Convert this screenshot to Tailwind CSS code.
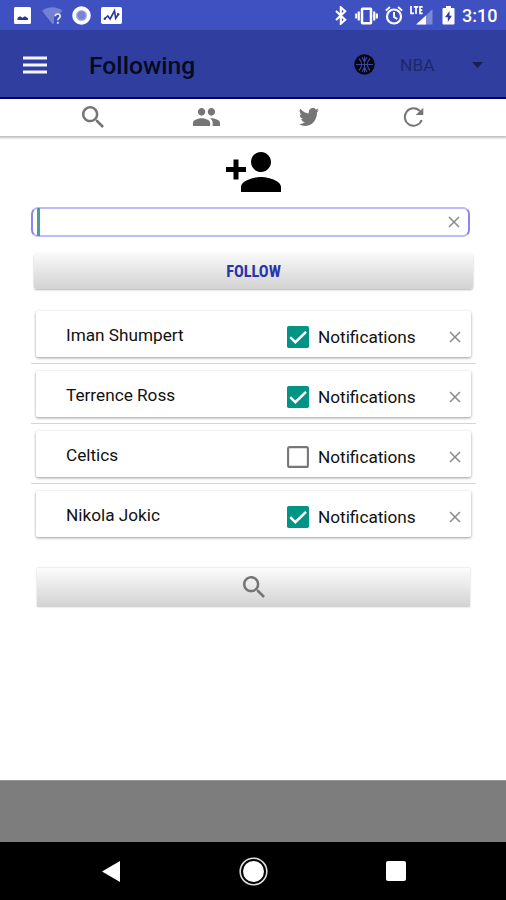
<!DOCTYPE html>
<html lang="en">
<head>
<meta charset="utf-8">
<title>Following</title>
<script src="https://cdn.jsdelivr.net/npm/@tailwindcss/browser@4"></script>
</head>
<body class="bg-white">
<svg class="hidden">
  <symbol id="search" viewBox="3 3 17.5 17.5"><path d="M15.5 14h-.79l-.28-.27C15.41 12.59 16 11.11 16 9.5 16 5.91 13.09 3 9.5 3S3 5.91 3 9.5 5.91 16 9.5 16c1.61 0 3.09-.59 4.23-1.57l.27.28v.79l5 4.99L20.49 19l-4.99-5zm-6 0C7.01 14 5 11.99 5 9.5S7.01 5 9.5 5 14 7.01 14 9.5 11.99 14 9.5 14z"/></symbol>
  <symbol id="close" viewBox="0 0 12 12"><path d="M1 1l10 10M11 1L1 11" fill="none" stroke="currentColor" stroke-width="1.5"/></symbol>
  <symbol id="checked" viewBox="0 0 22 22"><rect width="22" height="22" rx="1.8" fill="#009485"/><path d="M3.2 11.2l5.2 5L19 5.8" fill="none" stroke="#fff" stroke-width="2.5"/></symbol>
  <symbol id="unchecked" viewBox="0 0 22 22"><rect x="1.1" y="1.1" width="19.8" height="19.8" rx="1.5" fill="none" stroke="#777" stroke-width="2.1"/></symbol>
</svg>
<div class="flex h-[900px] w-[506px] flex-col overflow-hidden bg-white font-[Roboto,sans-serif] text-[#111]">
  <div class="flex h-[30px] shrink-0 items-center bg-[#3f51c1] pl-[14px] pr-[9px] pt-px text-white">
    <svg class="h-[17px] w-[17px]" viewBox="0 0 17 17"><rect width="17" height="17" rx="1.5" fill="#fff"/><path d="M3.5 13V10.800l2.500-1.600 2.300 1.500L11 9.200l3 2V13z" fill="#2638a0"/></svg>
    <svg class="ml-[11px] h-[18px] w-[21px]" viewBox="0 0 21 18"><path d="M0 3.8C5.500-.9 15-.9 20.500 3.800L17 7.500c-3-.5-5 1-5 4V16l-1.500 1.200z" fill="#7380d3"/><path d="M13.200 9.300c.2-3.100 5.300-3 5 0-.2 1.800-2.400 1.800-2.400 4M15.800 14.800v2" fill="none" stroke="#e8eaff" stroke-width="1.700"/></svg>
    <svg class="ml-[9px] h-[19px] w-[19px]" viewBox="0 0 19 19"><circle cx="9.500" cy="9.500" r="9.300" fill="#fff"/><circle cx="9.500" cy="9.500" r="5.500" fill="#a3acea"/><circle cx="9.500" cy="9.500" r="4.200" fill="#7884d4"/></svg>
    <svg class="ml-[10px] h-[17px] w-[21px]" viewBox="0 0 21 17"><rect width="21" height="17" rx="1.800" fill="#fff"/><path d="M3.400 12l3.400-3 2.300 3 4.400-8.200 1.200 7.500L17.500 7" fill="none" stroke="#2638a0" stroke-width="1.600"/><circle cx="3.800" cy="11.800" r="1.200" fill="#2638a0"/><circle cx="17.200" cy="7.300" r="1.200" fill="#2638a0"/></svg>
    <svg class="ml-auto h-[19px] w-[12px]" viewBox="0 0 12 19"><path d="M1 5l9.200 8.700-4.400 4V1.300l4.400 4L1 14" fill="none" stroke="#fff" stroke-width="2.100"/></svg>
    <svg class="ml-[8px] h-[18px] w-[23px]" viewBox="0 0 23 18"><rect x="7" y="1.700" width="9" height="14.600" rx=".5" fill="none" stroke="#fff" stroke-width="2.500"/><path d="M3.800 4.500v9M1.200 6.500v5M19.200 4.500v9M21.800 6.500v5" stroke="#fff" stroke-width="2.100"/></svg>
    <svg class="ml-[7px] h-[19px] w-[18px]" viewBox="0 0 18 19"><circle cx="9" cy="10.500" r="7" fill="none" stroke="#fff" stroke-width="2.200"/><path d="M9 6v5l3.300 2M.8 4.600L4.900 1M17.200 4.600L13.100 1" fill="none" stroke="#fff" stroke-width="1.900"/></svg>
    <svg class="ml-[7px] h-[19px] w-[24px]" viewBox="0 0 24 19"><path d="M22.500 3v15.500H7z" fill="#7b89dc"/><path d="M16 9.500v9H6z" fill="#fff"/><path d="M1 0v7.300h3M3.800.9h4.500M6 .9V8M12.700.9H10v6.400h2.700M10 4.100h2.300" fill="none" stroke="#fff" stroke-width="1.700"/></svg>
    <svg class="ml-[8px] h-[19px] w-[13px]" viewBox="0 0 13 19"><path d="M4 0h5v2h2.500Q12.500 2 12.500 3v14.500q0 1-1 1h-10q-1 0-1-1V3q0-1 1-1H4z" fill="#fff"/><path d="M7.500 5L3 11.200h2.800V16L10 9.700H7.500z" fill="#2d3da8"/></svg>
    <span class="ml-[7px] mt-px w-[35px] whitespace-nowrap text-[18px] font-medium leading-none">3:10</span>
  </div>
  <div class="flex h-[69px] shrink-0 items-center border-b-2 border-[#000078] bg-[#303f9f] pl-[23px] pr-[23px]">
    <svg class="mt-[2px] h-[18px] w-[24px]" viewBox="0 0 24 18"><path d="M0 1.900h24M0 9h24M0 16.100h24" stroke="#f4f5ff" stroke-width="3"/></svg>
    <h1 class="ml-[42px] mt-[5px] whitespace-nowrap text-[24.700px] font-medium leading-none text-[#050a20]">Following</h1>
    <svg class="ml-auto mt-[2px] h-[21px] w-[21px]" viewBox="0 0 21 21"><circle cx="10.500" cy="10.500" r="10.200" fill="#050710"/><path d="M2 10.500h17M10.500 2.500v16M5 4.500c3.500 3.500 3.500 8.500 0 12M16 4.500c-3.500 3.500-3.500 8.500 0 12M8 3l2.500 5L13 3M8 18l2.500-5 2.500 5" fill="none" stroke="#3947a0" stroke-width="1.100"/></svg>
    <span class="ml-[25px] mt-[5px] w-[36px] text-[17.400px] leading-none text-[#1e2866]">NBA</span>
    <svg class="ml-[36px] mt-[2px] h-[6px] w-[11px]" viewBox="0 0 11 6"><path d="M0 0h11L5.500 6z" fill="#18204f"/></svg>
  </div>
  <div class="flex h-[37px] shrink-0 items-center pb-[2px] pl-[82px] text-[#757575] shadow-[0_1px_2px_1px_rgba(0,0,0,0.25)]">
    <svg class="h-[22px] w-[22px] fill-current"><use href="#search"/></svg>
    <svg class="ml-[89px] h-[18px] w-[27px] fill-current" viewBox="1 5 22 14" preserveAspectRatio="none"><path d="M16 11c1.660 0 2.990-1.340 2.990-3S17.660 5 16 5c-1.660 0-3 1.340-3 3s1.340 3 3 3zm-8 0c1.660 0 2.990-1.340 2.990-3S9.660 5 8 5C6.340 5 5 6.340 5 8s1.340 3 3 3zm0 2c-2.330 0-7 1.170-7 3.500V19h14v-2.500c0-2.330-4.670-3.500-7-3.500zm8 0c-.29 0-.62.02-.97.05 1.160.84 1.970 1.970 1.970 3.450V19h6v-2.500c0-2.330-4.670-3.500-7-3.500z"/></svg>
    <svg class="ml-[79px] h-[18px] w-[20px] fill-current" viewBox="0 2.300 24 19.500" preserveAspectRatio="none"><path d="M23.950 4.570a10 10 0 0 1-2.820.77 4.960 4.960 0 0 0 2.160-2.720c-.95.550-2 .95-3.130 1.180a4.920 4.920 0 0 0-8.380 4.480C7.690 8.090 4.070 6.130 1.640 3.160a4.920 4.920 0 0 0 1.520 6.570 4.900 4.900 0 0 1-2.230-.61v.06a4.920 4.920 0 0 0 3.950 4.820 5 5 0 0 1-2.210.09 4.940 4.940 0 0 0 4.600 3.420A9.870 9.870 0 0 1 0 19.540a14 14 0 0 0 7.550 2.210c9.050 0 14-7.500 14-13.980 0-.21 0-.42-.02-.63a9.940 9.940 0 0 0 2.460-2.550z"/></svg>
    <svg class="ml-[84px] h-[20px] w-[21px]" viewBox="0 0 21 20"><path d="M17 4.200A8.700 8.700 0 1 0 18.700 13" fill="none" stroke="currentColor" stroke-width="2"/><path d="M20.300.8V8h-7.600z" fill="currentColor"/></svg>
  </div>
  <main class="flex grow flex-col">
    <svg class="ml-[226px] mt-[16px] h-[40px] w-[55px] shrink-0" viewBox="1 4 22 16"><path d="M15 12c2.210 0 4-1.790 4-4s-1.790-4-4-4-4 1.790-4 4 1.790 4 4 4zm-9-2V7H4v3H1v2h3v3h2v-3h3v-2H6zm9 4c-2.670 0-8 1.340-8 4v2h16v-2c0-2.660-5.330-4-8-4z"/></svg>
    <div class="ml-[31px] mt-[15px] flex h-[30px] w-[439px] items-center rounded-[7px] border-2 border-x-[#8c85f0] border-y-[#beb9fb] pl-[4px] pr-[8px]">
      <div class="h-[28px] w-[3px] shrink-0 bg-[#4a9f92]"></div>
      <svg class="ml-auto h-[12px] w-[12px] text-[#8a8a8a]"><use href="#close"/></svg>
    </div>
    <div class="ml-[34px] mt-[16px] flex h-[36px] w-[439px] items-center justify-center rounded-[3px] bg-linear-to-b from-[#fafafa] to-[#d2d2d2] shadow-[0_1px_2px_rgba(0,0,0,0.3)]">
      <span class="font-['Roboto_Condensed',Roboto,sans-serif] inline-block scale-x-[.96] text-[17px] font-bold leading-none text-[#2836ab]">FOLLOW</span>
    </div>
    <div id="list" class="ml-[31px] mt-[18px] flex w-[445px] flex-col gap-[3px]"></div>
    <div class="ml-[37px] mt-[24px] flex h-[39px] w-[433px] items-center justify-center bg-linear-to-b from-[#fcfcfc] to-[#d2d2d2] pb-px text-[#757575] shadow-[0_0_2px_rgba(0,0,0,0.2)]"><svg class="h-[22px] w-[22px] fill-current"><use href="#search"/></svg></div>
  </main>
  <div class="h-[62px] shrink-0 border-t border-[#999] bg-[#7d7d7d]"></div>
  <div class="flex h-[58px] shrink-0 items-center bg-black pl-[102px]">
    <svg class="h-[21px] w-[18px]" viewBox="0 0 18 21"><path d="M0 10.500L18 0v21z" fill="#fff"/></svg>
    <svg class="ml-[119px] h-[29px] w-[29px]" viewBox="0 0 29 29"><circle cx="14.500" cy="14.500" r="13.300" fill="none" stroke="#ddd" stroke-width="1.600"/><circle cx="14.500" cy="14.500" r="10.500" fill="#fff"/></svg>
    <div class="ml-[118px] h-[20px] w-[20px] rounded-[2px] bg-white"></div>
  </div>
</div>
<script>
  const follows = [['Iman Shumpert', true], ['Terrence Ross', true], ['Celtics', false], ['Nikola Jokic', true]];
  document.getElementById('list').innerHTML = follows.map(([name, on], i) => `
    <div class="flex h-[57px] border-b ${i < 3 ? 'border-[#d5d5d5]' : 'border-transparent'} px-[5px] pb-[6px] pt-[4px]">
      <div class="flex w-full items-center rounded-[2px] pl-[30px] pr-[10px] shadow-[0_1px_3px_rgba(0,0,0,0.4)]">
        <span class="mt-[4px] w-[221px] text-[17.2px] leading-none">${name}</span>
        <svg class="mt-[5px] h-[22px] w-[22px]"><use href="${on ? '#checked' : '#unchecked'}"/></svg>
        <span class="ml-[9px] mt-[8px] text-[17.2px] leading-none">Notifications</span>
        <svg class="ml-auto mt-[5px] h-[12px] w-[12px] text-[#8a8a8a]"><use href="#close"/></svg>
      </div>
    </div>`).join('');
</script>
</body>
</html>
